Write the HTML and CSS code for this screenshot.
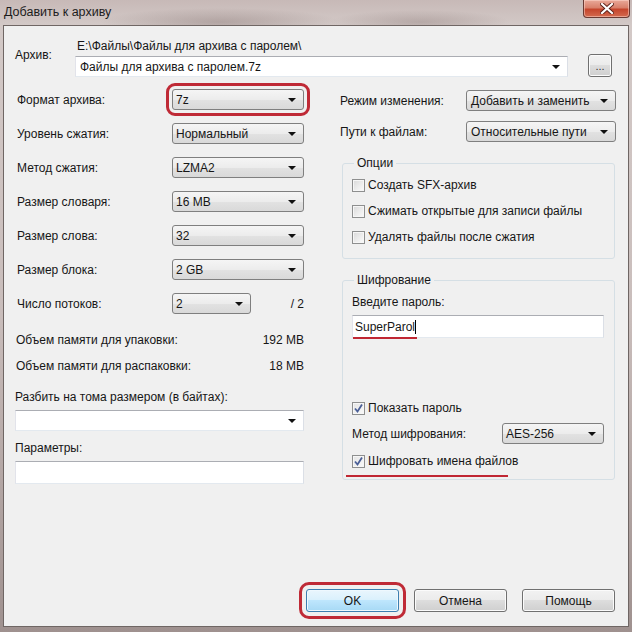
FILE: index.html
```html
<!DOCTYPE html>
<html lang="ru">
<head>
    <meta charset="UTF-8">
    <title>Добавить к архиву</title>
    <link rel="stylesheet" href="styles.css">
</head>
<body>
    <div class="window">
        <div class="titlebar">
            <span class="title">Добавить к архиву</span>
            <div class="close">
                <svg width="14" height="11" viewBox="0 0 14 11">
                    <path d="M2 1 L12 10 M12 1 L2 10" stroke="#5b2018" stroke-width="4" stroke-linecap="square"/>
                    <path d="M2 1 L12 10 M12 1 L2 10" stroke="#ffffff" stroke-width="2.2" stroke-linecap="square"/>
                </svg>
            </div>
        </div>

        <div class="client">
            <div class="archive">
                <span class="archive-label">Архив:</span>
                <div class="archive-main">
                    <div class="path">E:\Файлы\Файлы для архива с паролем\</div>
                    <div class="combo edit">Файлы для архива с паролем.7z<i class="arrow"></i></div>
                </div>
                <button class="btn browse">...</button>
            </div>

            <div class="columns">
                <div class="left">
                    <div class="field">
                        <span class="label">Формат архива:</span>
                        <div class="combo mark">7z<i class="arrow"></i></div>
                    </div>
                    <div class="field">
                        <span class="label">Уровень сжатия:</span>
                        <div class="combo">Нормальный<i class="arrow"></i></div>
                    </div>
                    <div class="field">
                        <span class="label">Метод сжатия:</span>
                        <div class="combo">LZMA2<i class="arrow"></i></div>
                    </div>
                    <div class="field">
                        <span class="label">Размер словаря:</span>
                        <div class="combo">16 MB<i class="arrow"></i></div>
                    </div>
                    <div class="field">
                        <span class="label">Размер слова:</span>
                        <div class="combo">32<i class="arrow"></i></div>
                    </div>
                    <div class="field">
                        <span class="label">Размер блока:</span>
                        <div class="combo">2 GB<i class="arrow"></i></div>
                    </div>
                    <div class="field">
                        <span class="label">Число потоков:</span>
                        <div class="combo short">2<i class="arrow"></i></div>
                        <span class="threads-max">/ 2</span>
                    </div>

                    <div class="memory first">
                        <span>Объем памяти для упаковки:</span>
                        <span>192 MB</span>
                    </div>
                    <div class="memory">
                        <span>Объем памяти для распаковки:</span>
                        <span>18 MB</span>
                    </div>

                    <div class="caption split">Разбить на тома размером (в байтах):</div>
                    <div class="combo edit">&nbsp;<i class="arrow"></i></div>

                    <div class="caption params">Параметры:</div>
                    <div class="edit-box"></div>
                </div>

                <div class="right">
                    <div class="field">
                        <span class="label">Режим изменения:</span>
                        <div class="combo wide">Добавить и заменить<i class="arrow"></i></div>
                    </div>
                    <div class="field">
                        <span class="label">Пути к файлам:</span>
                        <div class="combo wide">Относительные пути<i class="arrow"></i></div>
                    </div>

                    <fieldset class="group options">
                        <legend>Опции</legend>
                        <div class="check-row"><span class="check"></span>Создать SFX-архив</div>
                        <div class="check-row"><span class="check"></span>Сжимать открытые для записи файлы</div>
                        <div class="check-row"><span class="check"></span>Удалять файлы после сжатия</div>
                    </fieldset>

                    <fieldset class="group crypt">
                        <legend>Шифрование</legend>
                        <div class="caption">Введите пароль:</div>
                        <div class="edit-box password"><span class="underlined">SuperParol</span><i class="caret"></i></div>
                        <div class="check-row show-pass">
                            <span class="check on">
                                <svg width="11" height="11" viewBox="0 0 11 11"><path d="M2 5.5 L4.5 8.5 L9 1.5" fill="none" stroke="#4a5f97" stroke-width="1.8"/></svg>
                            </span>Показать пароль
                        </div>
                        <div class="field method">
                            <span class="label">Метод шифрования:</span>
                            <div class="combo cipher">AES-256<i class="arrow"></i></div>
                        </div>
                        <div class="check-row names">
                            <span class="check on">
                                <svg width="11" height="11" viewBox="0 0 11 11"><path d="M2 5.5 L4.5 8.5 L9 1.5" fill="none" stroke="#4a5f97" stroke-width="1.8"/></svg>
                            </span>Шифровать имена файлов
                        </div>
                    </fieldset>
                </div>
            </div>

            <div class="buttons">
                <button class="btn default">OK</button>
                <button class="btn">Отмена</button>
                <button class="btn">Помощь</button>
            </div>
        </div>
    </div>
</body>
</html>
```

FILE: styles.css
```css
* {
    box-sizing: border-box;
    margin: 0;
    padding: 0;
}

body {
    width: 632px;
    height: 632px;
    overflow: hidden;
    font-family: 'Liberation Sans', Arial, sans-serif;
    font-size: 12px;
    color: #161616;
    background: #b9acaa;
}

.window {
    height: 632px;
    display: flex;
    flex-direction: column;
    padding: 0 3px 5px;
    background:
        radial-gradient(ellipse 120px 14px at 220px 22px, rgba(120, 100, 98, 0.35), transparent),
        radial-gradient(ellipse 90px 12px at 420px 22px, rgba(120, 100, 98, 0.3), transparent),
        linear-gradient(180deg, #c7b9b7 0%, #d3c9c7 4%, #c9bdbb 50%, #9f918f 100%);
}

.titlebar {
    height: 25px;
    display: flex;
    justify-content: space-between;
    align-items: flex-start;
}

.title {
    line-height: 25px;
    padding-left: 1px;
    font-size: 12.5px;
    color: #1c1c1c;
}

.close {
    width: 47px;
    height: 18px;
    margin-right: -1px;
    display: flex;
    align-items: center;
    justify-content: center;
    border: 1px solid #6a3a33;
    border-top: none;
    border-radius: 0 0 4px 4px;
    background: linear-gradient(180deg, #e9a999 0%, #d9806b 45%, #c5452c 55%, #d46a4f 100%);
    box-shadow: inset 0 0 0 1px rgba(255, 220, 210, 0.5);
}

.client {
    flex: 1;
    display: flex;
    flex-direction: column;
    background: #f0f0f0;
    border: 1px solid #6f6664;
    padding: 13px 11px 14px;
}

/* archive name */
.archive {
    display: flex;
    align-items: flex-start;
}

.archive-label {
    width: 60px;
    margin-top: 9px;
    line-height: 14px;
}

.archive-main {
    width: 493px;
}

.path {
    line-height: 14px;
    padding-left: 2px;
    margin-bottom: 3px;
}

.btn.browse {
    width: 24px;
    height: 23px;
    margin: 15px 0 0 20px;
    line-height: 16px;
    font-size: 11px;
    color: #333;
}

/* combos */
.combo {
    height: 21px;
    width: 132px;
    flex: none;
    display: flex;
    align-items: center;
    padding-left: 3px;
    border: 1px solid #7f7f7f;
    border-radius: 3px;
    background: linear-gradient(180deg, #f5f5f5 0%, #ececec 50%, #e2e2e2 51%, #d9d9d9 100%);
    white-space: nowrap;
}

.combo.edit {
    width: auto;
    padding-left: 4px;
    border-radius: 0;
    border-color: #abadb3 #dbdfe6 #e3e9ef #e2e3ea;
    background: #fff;
}

.combo.short {
    width: 79px;
}

.combo.wide {
    width: 150px;
    padding-left: 4px;
}

.combo.cipher {
    width: 102px;
}

.combo.mark {
    outline: 3px solid #bf2a36;
    outline-offset: 3px;
}

.arrow {
    margin-left: auto;
    margin-right: 7px;
    width: 0;
    height: 0;
    border-left: 4px solid transparent;
    border-right: 4px solid transparent;
    border-top: 4px solid #111;
}

.edit-box {
    height: 23px;
    background: #fff;
    border: 1px solid;
    border-color: #abadb3 #dbdfe6 #e3e9ef #e2e3ea;
}

/* layout */
.columns {
    display: flex;
    margin-top: 12px;
}

.left {
    width: 289px;
}

.right {
    width: 276px;
    margin-left: 36px;
    padding-top: 1px;
}

.field {
    display: flex;
    align-items: center;
    height: 21px;
    margin-bottom: 13px;
}

.left .field .label {
    width: 157px;
    flex: none;
    padding-left: 2px;
}

.right .field {
    margin-bottom: 10px;
}

.right .field .label {
    width: 126px;
}

.threads-max {
    margin-left: auto;
}

.memory {
    display: flex;
    justify-content: space-between;
    line-height: 14px;
    padding-left: 1px;
    margin-top: 12px;
}

.memory.first {
    margin-top: 19px;
}

.caption {
    line-height: 14px;
    margin-bottom: 6px;
}

.caption.split {
    margin-top: 17px;
}

.caption.params {
    margin-top: 10px;
}

/* group boxes */
.group {
    margin: 14px 1px 0 2px;
    border: 1px solid #d5dfe5;
    border-radius: 3px;
    padding: 0 10px 13px 9px;
}

.group legend {
    line-height: 14px;
    padding: 0 3px 0 3px;
    margin-left: 2px;
}

.check-row {
    display: flex;
    align-items: center;
    height: 16px;
    white-space: nowrap;
}

.options .check-row {
    margin-top: 10px;
}

.options .check-row:first-of-type {
    margin-top: 7px;
}

.check {
    width: 13px;
    height: 13px;
    margin-right: 3px;
    display: flex;
    align-items: center;
    justify-content: center;
    border: 1px solid #8e8f8f;
    background: linear-gradient(135deg, #d9d9d9 0%, #eeeeee 60%, #fcfcfc 100%);
    box-shadow: inset 0 0 0 1px #f6f6f6;
}

.check.on {
    background: linear-gradient(135deg, #e4e4e4 0%, #fafafa 100%);
}

.crypt {
    padding-bottom: 10px;
}

.crypt .caption {
    margin-top: 8px;
}

.password {
    display: flex;
    align-items: center;
    padding-left: 2px;
}

.underlined {
    position: relative;
}

.underlined::after {
    content: '';
    position: absolute;
    left: -2px;
    right: -2px;
    bottom: -5px;
    height: 2px;
    background: #c02733;
}

.caret {
    width: 1px;
    height: 14px;
    background: #000;
}

.show-pass {
    margin-top: 62px;
}

.crypt .field.method {
    margin: 7px 0 0;
}

.crypt .field.method .label {
    width: 150px;
}

.names {
    margin-top: 9px;
    position: relative;
}

.names::after {
    content: '';
    position: absolute;
    left: -6px;
    width: 162px;
    bottom: -8px;
    height: 2px;
    background: #c02733;
}

/* buttons */
.buttons {
    margin-top: auto;
    margin-right: 2px;
    display: flex;
    justify-content: flex-end;
    gap: 15px;
}

.btn {
    width: 93px;
    height: 23px;
    font-family: inherit;
    font-size: 12px;
    color: #161616;
    border: 1px solid #707070;
    border-radius: 3px;
    background: linear-gradient(180deg, #f2f2f2 0%, #ebebeb 49%, #dddddd 50%, #cfcfcf 100%);
    box-shadow: inset 0 0 0 1px #fbfbfb;
}

.btn.default {
    border-color: #3c7fb1;
    background: linear-gradient(180deg, #eaf6fd 0%, #d9f0fc 49%, #bee6fd 50%, #a7d9f5 100%);
    box-shadow: inset 0 0 0 1px #eef8fe;
    outline: 3px solid #bf2a36;
    outline-offset: 4px;
}
```
